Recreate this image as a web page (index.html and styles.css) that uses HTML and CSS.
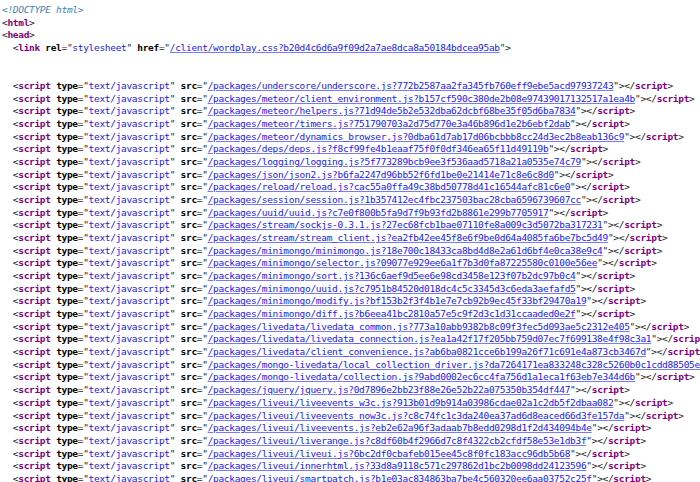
FILE: index.html
```html
<!DOCTYPE html>
<html lang="en">
<head>
  <meta charset="UTF-8" />
  <title>Source of wordplay</title>
  <link rel="stylesheet" href="styles.css">
</head>
<body>
<pre class="source"><span class="doctype">&lt;!DOCTYPE html&gt;</span>
&lt;<span class="tag">html</span>&gt;
&lt;<span class="tag">head</span>&gt;
  &lt;<span class="tag">link</span> <span class="attr">rel</span>="<span class="val">stylesheet</span>" <span class="attr">href</span>="<span class="link">/client/wordplay.css?b20d4c6d6a9f09d2a7ae8dca8a50184bdcea95ab</span>"&gt;


  &lt;<span class="tag">script</span> <span class="attr">type</span>="<span class="val">text/javascript</span>" <span class="attr">src</span>="<span class="link">/packages/underscore/underscore.js?772b2587aa2fa345fb760eff9ebe5acd97937243</span>"&gt;&lt;/<span class="tag">script</span>&gt;
  &lt;<span class="tag">script</span> <span class="attr">type</span>="<span class="val">text/javascript</span>" <span class="attr">src</span>="<span class="link">/packages/meteor/client_environment.js?b157cf590c380de2b08e97439017132517a1ea4b</span>"&gt;&lt;/<span class="tag">script</span>&gt;
  &lt;<span class="tag">script</span> <span class="attr">type</span>="<span class="val">text/javascript</span>" <span class="attr">src</span>="<span class="link">/packages/meteor/helpers.js?71d94de5b2e532dba62dcbf68be35f05d6ba7834</span>"&gt;&lt;/<span class="tag">script</span>&gt;
  &lt;<span class="tag">script</span> <span class="attr">type</span>="<span class="val">text/javascript</span>" <span class="attr">src</span>="<span class="link">/packages/meteor/timers.js?751790703a2d75d770e3a46b896d1e2b6ebf2dab</span>"&gt;&lt;/<span class="tag">script</span>&gt;
  &lt;<span class="tag">script</span> <span class="attr">type</span>="<span class="val">text/javascript</span>" <span class="attr">src</span>="<span class="link">/packages/meteor/dynamics_browser.js?0dba61d7ab17d06bcbbb8cc24d3ec2b8eab136c9</span>"&gt;&lt;/<span class="tag">script</span>&gt;
  &lt;<span class="tag">script</span> <span class="attr">type</span>="<span class="val">text/javascript</span>" <span class="attr">src</span>="<span class="link">/packages/deps/deps.js?f8cf99fe4b1eaaf75f0f0df346ea65f11d49119b</span>"&gt;&lt;/<span class="tag">script</span>&gt;
  &lt;<span class="tag">script</span> <span class="attr">type</span>="<span class="val">text/javascript</span>" <span class="attr">src</span>="<span class="link">/packages/logging/logging.js?5f773289bcb9ee3f536aad5718a21a0535e74c79</span>"&gt;&lt;/<span class="tag">script</span>&gt;
  &lt;<span class="tag">script</span> <span class="attr">type</span>="<span class="val">text/javascript</span>" <span class="attr">src</span>="<span class="link">/packages/json/json2.js?b6fa2247d96bb52f6fd1be0e21414e71c8e6c8d0</span>"&gt;&lt;/<span class="tag">script</span>&gt;
  &lt;<span class="tag">script</span> <span class="attr">type</span>="<span class="val">text/javascript</span>" <span class="attr">src</span>="<span class="link">/packages/reload/reload.js?cac55a0ffa49c38bd50778d41c16544afc81c6e0</span>"&gt;&lt;/<span class="tag">script</span>&gt;
  &lt;<span class="tag">script</span> <span class="attr">type</span>="<span class="val">text/javascript</span>" <span class="attr">src</span>="<span class="link">/packages/session/session.js?1b357412ec4fbc237503bac28cba6596739607cc</span>"&gt;&lt;/<span class="tag">script</span>&gt;
  &lt;<span class="tag">script</span> <span class="attr">type</span>="<span class="val">text/javascript</span>" <span class="attr">src</span>="<span class="link">/packages/uuid/uuid.js?c7e0f800b5fa9d7f9b93fd2b8861e299b7705917</span>"&gt;&lt;/<span class="tag">script</span>&gt;
  &lt;<span class="tag">script</span> <span class="attr">type</span>="<span class="val">text/javascript</span>" <span class="attr">src</span>="<span class="link">/packages/stream/sockjs-0.3.1.js?27ec68fcb1bae07110fe8a009c3d5072ba317231</span>"&gt;&lt;/<span class="tag">script</span>&gt;
  &lt;<span class="tag">script</span> <span class="attr">type</span>="<span class="val">text/javascript</span>" <span class="attr">src</span>="<span class="link">/packages/stream/stream_client.js?ea2fb42ee45f8e6f9be0d64a4085fa6be7bc5d49</span>"&gt;&lt;/<span class="tag">script</span>&gt;
  &lt;<span class="tag">script</span> <span class="attr">type</span>="<span class="val">text/javascript</span>" <span class="attr">src</span>="<span class="link">/packages/minimongo/minimongo.js?18e700c18433ca8bd4d8e2a61d6bf4e0ca38e9c4</span>"&gt;&lt;/<span class="tag">script</span>&gt;
  &lt;<span class="tag">script</span> <span class="attr">type</span>="<span class="val">text/javascript</span>" <span class="attr">src</span>="<span class="link">/packages/minimongo/selector.js?09077e929ee6a1f7b3d0fa87225580c0100e56ee</span>"&gt;&lt;/<span class="tag">script</span>&gt;
  &lt;<span class="tag">script</span> <span class="attr">type</span>="<span class="val">text/javascript</span>" <span class="attr">src</span>="<span class="link">/packages/minimongo/sort.js?136c6aef9d5ee6e98cd3458e123f07b2dc97b0c4</span>"&gt;&lt;/<span class="tag">script</span>&gt;
  &lt;<span class="tag">script</span> <span class="attr">type</span>="<span class="val">text/javascript</span>" <span class="attr">src</span>="<span class="link">/packages/minimongo/uuid.js?c7951b84520d018dc4c5c3345d3c6eda3aefafd5</span>"&gt;&lt;/<span class="tag">script</span>&gt;
  &lt;<span class="tag">script</span> <span class="attr">type</span>="<span class="val">text/javascript</span>" <span class="attr">src</span>="<span class="link">/packages/minimongo/modify.js?bf153b2f3f4b1e7e7cb92b9ec45f33bf29470a19</span>"&gt;&lt;/<span class="tag">script</span>&gt;
  &lt;<span class="tag">script</span> <span class="attr">type</span>="<span class="val">text/javascript</span>" <span class="attr">src</span>="<span class="link">/packages/minimongo/diff.js?b6eea41bc2810a57e5c9f2d3c1d31ccaaded0e2f</span>"&gt;&lt;/<span class="tag">script</span>&gt;
  &lt;<span class="tag">script</span> <span class="attr">type</span>="<span class="val">text/javascript</span>" <span class="attr">src</span>="<span class="link">/packages/livedata/livedata_common.js?773a10abb9382b8c09f3fec5d093ae5c2312e405</span>"&gt;&lt;/<span class="tag">script</span>&gt;
  &lt;<span class="tag">script</span> <span class="attr">type</span>="<span class="val">text/javascript</span>" <span class="attr">src</span>="<span class="link">/packages/livedata/livedata_connection.js?ea1a42f17f205bb759d07ec7f699138e4f98c3a1</span>"&gt;&lt;/<span class="tag">script</span>&gt;
  &lt;<span class="tag">script</span> <span class="attr">type</span>="<span class="val">text/javascript</span>" <span class="attr">src</span>="<span class="link">/packages/livedata/client_convenience.js?ab6ba0821cce6b199a26f71c691e4a873cb3467d</span>"&gt;&lt;/<span class="tag">script</span>&gt;
  &lt;<span class="tag">script</span> <span class="attr">type</span>="<span class="val">text/javascript</span>" <span class="attr">src</span>="<span class="link">/packages/mongo-livedata/local_collection_driver.js?da7264171ea833248c328c5260b0c1cdd88505e4</span>"&gt;&lt;/<span class="tag">script</span>&gt;
  &lt;<span class="tag">script</span> <span class="attr">type</span>="<span class="val">text/javascript</span>" <span class="attr">src</span>="<span class="link">/packages/mongo-livedata/collection.js?9abd0002ec6cc4fa756d1a1eca1f63eb7e344d6b</span>"&gt;&lt;/<span class="tag">script</span>&gt;
  &lt;<span class="tag">script</span> <span class="attr">type</span>="<span class="val">text/javascript</span>" <span class="attr">src</span>="<span class="link">/packages/jquery/jquery.js?0d7896e2bb23f88e26e52b22a075350b354df447</span>"&gt;&lt;/<span class="tag">script</span>&gt;
  &lt;<span class="tag">script</span> <span class="attr">type</span>="<span class="val">text/javascript</span>" <span class="attr">src</span>="<span class="link">/packages/liveui/liveevents_w3c.js?913b01d9b914a03986cdae02a1c2db5f2dbaa082</span>"&gt;&lt;/<span class="tag">script</span>&gt;
  &lt;<span class="tag">script</span> <span class="attr">type</span>="<span class="val">text/javascript</span>" <span class="attr">src</span>="<span class="link">/packages/liveui/liveevents_now3c.js?c8c74fc1c3da240ea37ad6d8eaced66d3fe157da</span>"&gt;&lt;/<span class="tag">script</span>&gt;
  &lt;<span class="tag">script</span> <span class="attr">type</span>="<span class="val">text/javascript</span>" <span class="attr">src</span>="<span class="link">/packages/liveui/liveevents.js?eb2e62a96f3adaab7b8edd0298d1f2d434094b4e</span>"&gt;&lt;/<span class="tag">script</span>&gt;
  &lt;<span class="tag">script</span> <span class="attr">type</span>="<span class="val">text/javascript</span>" <span class="attr">src</span>="<span class="link">/packages/liveui/liverange.js?c8df60b4f2966d7c8f4322cb2cfdf58e53e1db3f</span>"&gt;&lt;/<span class="tag">script</span>&gt;
  &lt;<span class="tag">script</span> <span class="attr">type</span>="<span class="val">text/javascript</span>" <span class="attr">src</span>="<span class="link">/packages/liveui/liveui.js?6bc2df0cbafeb015ee45c8f0fc183acc96db5b68</span>"&gt;&lt;/<span class="tag">script</span>&gt;
  &lt;<span class="tag">script</span> <span class="attr">type</span>="<span class="val">text/javascript</span>" <span class="attr">src</span>="<span class="link">/packages/liveui/innerhtml.js?33d8a9118c571c297862d1bc2b0098dd24123596</span>"&gt;&lt;/<span class="tag">script</span>&gt;
  &lt;<span class="tag">script</span> <span class="attr">type</span>="<span class="val">text/javascript</span>" <span class="attr">src</span>="<span class="link">/packages/liveui/smartpatch.js?b1e03ac834863ba7be4c560320ee6aa03752c25f</span>"&gt;&lt;/<span class="tag">script</span>&gt;</pre>
</body>
</html>
```

FILE: styles.css
```css
html, body {
  margin: 0;
  padding: 0;
  background: #fff;
  overflow: hidden;
}

.source {
  margin: 0;
  padding: 4px 0 0 2px;
  font-family: "DejaVu Sans Mono", "Liberation Mono", monospace;
  font-size: 9.5px;
  letter-spacing: -0.31px;
  line-height: 12.67px;
  color: #222;
  white-space: pre;
}

.doctype {
  color: #4682b4;
  font-style: italic;
}

.tag {
  color: #800080;
  font-weight: bold;
}

.attr {
  color: #000;
  font-weight: bold;
}

.val {
  color: #1a1adc;
}

.link {
  color: #1a1aee;
  text-decoration: underline;
  text-decoration-color: #7b7bf0;
}
```
